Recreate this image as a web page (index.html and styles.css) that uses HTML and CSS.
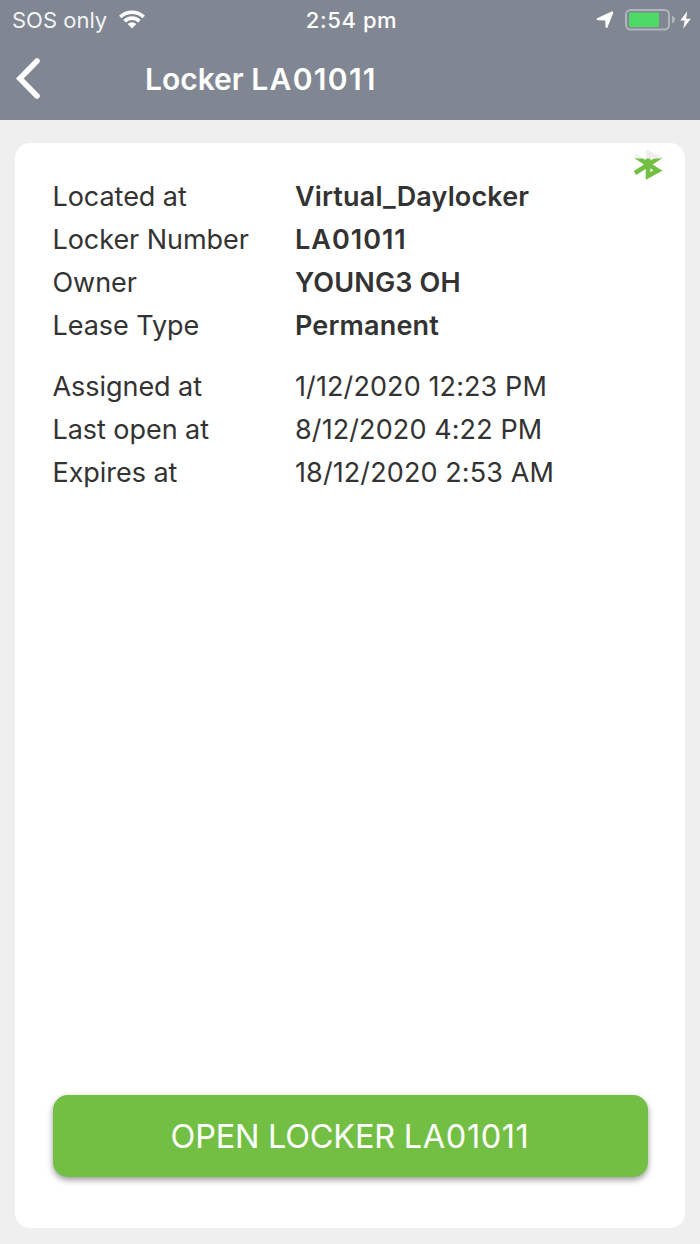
FILE: index.html
```html
<!DOCTYPE html>
<html lang="en">
<head>
    <meta charset="UTF-8" />
    <title>Locker LA01011</title>
    <link rel="stylesheet" href="styles.css">
</head>
<body>

<header>
    <div class="status-bar">
        <div class="status-left">
            <span class="carrier">SOS only</span>
            <svg class="wifi" width="28" height="20" viewBox="0 0 28 20">
                <path d="M1 6.7 A18.6 18.6 0 0 1 27 6.7 L24.3 9.3 A14.7 14.7 0 0 0 3.7 9.3 Z" />
                <path d="M5.3 10.9 A12.4 12.4 0 0 1 22.7 10.9 L20 13.5 A8.6 8.6 0 0 0 8 13.5 Z" />
                <path d="M9.7 15.1 A6.2 6.2 0 0 1 18.3 15.1 L14 19.4 Z" />
            </svg>
        </div>
        <span class="clock">2:54 pm</span>
        <div class="status-right">
            <svg width="18" height="18" viewBox="0 0 18 18">
                <path d="M15.6 .6 Q17.6 0 17.2 2 L11.4 16.4 Q10.2 18 9.6 16 L9.2 9.5 L1.7 9.2 Q-.5 8.2 1.1 7.2 Z" />
            </svg>
            <svg class="battery" width="50" height="22" viewBox="0 0 50 22">
                <rect class="battery-case" x="1" y="1" width="43" height="19.6" rx="4.5" />
                <rect class="battery-level" x="4" y="3.5" width="30" height="14.5" rx="1" />
                <path class="battery-tip" d="M47 6.5 Q50 8 50 10.5 T47 14.5 Z" />
            </svg>
            <svg class="bolt" width="11" height="18" viewBox="0 0 11 18">
                <path d="M7.2 .3 L.3 9.6 H4.7 L3.2 17.7 L10.7 7.7 H6.2 Z" />
            </svg>
        </div>
    </div>
    <nav>
        <a class="back" href="#">
            <svg width="26" height="42" viewBox="0 0 26 42">
                <path d="M22 3 L4.8 20.5 L22 38" />
            </svg>
        </a>
        <h1>Locker <span class="locker-id">LA01011</span></h1>
    </nav>
</header>

<main class="card">
    <svg class="bluetooth" width="30" height="32" viewBox="0 0 30 32">
        <clipPath id="signal">
            <rect x="0" y="9.5" width="30" height="22" />
        </clipPath>
        <path class="bt-off" d="M2 7 L25.5 21.5 L15.5 27 V4 L25.5 9 L2 24" />
        <path class="bt-on" clip-path="url(#signal)" d="M2 7 L25 21.5 L15 27 V4 L25.5 9 L2 24" />
    </svg>

    <dl class="details main-details">
        <dt>Located at</dt><dd>Virtual_Daylocker</dd>
        <dt>Locker Number</dt><dd><span class="locker-id">LA01011</span></dd>
        <dt>Owner</dt><dd>YOUNG3 OH</dd>
        <dt>Lease Type</dt><dd>Permanent</dd>
    </dl>
    <dl class="details dates">
        <dt>Assigned at</dt><dd>1/12/2020 12:23 PM</dd>
        <dt>Last open at</dt><dd>8/12/2020 4:22 PM</dd>
        <dt>Expires at</dt><dd>18/12/2020 2:53 AM</dd>
    </dl>

    <button type="button">OPEN LOCKER <span class="locker-id">LA01011</span></button>
</main>

</body>
</html>
```
FILE: styles.css
```css
* {
    box-sizing: border-box;
}
body {
    display: flex;
    flex-direction: column;
    height: 1244px;
    margin: 0;
    font-family: Inter, Roboto, sans-serif;
    background-color: #efefef;
    color: #333;
}
header {
    height: 119.5px;
    background-color: #808792;
    color: #fff;
}
svg {
    display: block;
    fill: #fff;
}
.status-bar {
    display: grid;
    grid-template-columns: 1fr auto 1fr;
    align-items: center;
    height: 39px;
    padding: 0 9px 0 12px;
    font-size: 22px;
}
.status-left,
.status-right {
    display: flex;
    align-items: center;
}
.status-left {
    gap: 11px;
}
.status-right {
    justify-content: flex-end;
}
.wifi {
    margin-top: -2px;
}
.carrier {
    opacity: 0.9;
}
.clock {
    font-weight: 500;
    letter-spacing: 0.6px;
}
.battery {
    margin-left: 11px;
}
.battery-case {
    fill: none;
    stroke: #b0b5bc;
    stroke-width: 2;
}
.battery-level {
    fill: #4cd964;
}
.battery-tip {
    fill: #b0b5bc;
}
.bolt {
    margin-left: 5px;
}
nav {
    display: flex;
    align-items: center;
    height: 80px;
    padding-left: 15px;
}
.back path {
    fill: none;
    stroke: #fff;
    stroke-width: 5.5;
    stroke-linecap: round;
}
h1 {
    margin: 0 0 0 104px;
    font-size: 30px;
    font-weight: 600;
}
h1 .locker-id {
    letter-spacing: 1.3px;
}
.card {
    position: relative;
    display: flex;
    flex-direction: column;
    flex: 1;
    margin: 23px 15px 16px;
    padding: 32px 37.5px 51.5px;
    background-color: #fff;
    border-radius: 15px;
}
.bluetooth {
    position: absolute;
    top: 6px;
    right: 22px;
}
.bluetooth path {
    fill: none;
    stroke-width: 4.5;
}
.bluetooth .bt-off {
    stroke: #eee;
}
.bluetooth .bt-on {
    stroke: #72bf44;
}
.details {
    display: grid;
    grid-template-columns: 242.5px 1fr;
    margin: 0;
    font-size: 27px;
    line-height: 43px;
}
.details dt {
    letter-spacing: -0.05px;
}
.details dd {
    margin: 0;
}
.main-details dd {
    font-weight: 600;
    letter-spacing: 0.15px;
}
.main-details .locker-id {
    letter-spacing: 1px;
}
.dates {
    margin-top: 18.5px;
}
.dates dd {
    letter-spacing: 0.1px;
}
button {
    height: 82px;
    margin-top: auto;
    padding-top: 3px;
    background-color: #72bf44;
    color: #fff;
    border: none;
    border-radius: 15px;
    box-shadow: 0 3px 6px rgba(0, 0, 0, 0.4);
    font-family: inherit;
    font-size: 32.5px;
    letter-spacing: -0.25px;
    cursor: pointer;
}
button .locker-id {
    letter-spacing: 0.6px;
}
```
